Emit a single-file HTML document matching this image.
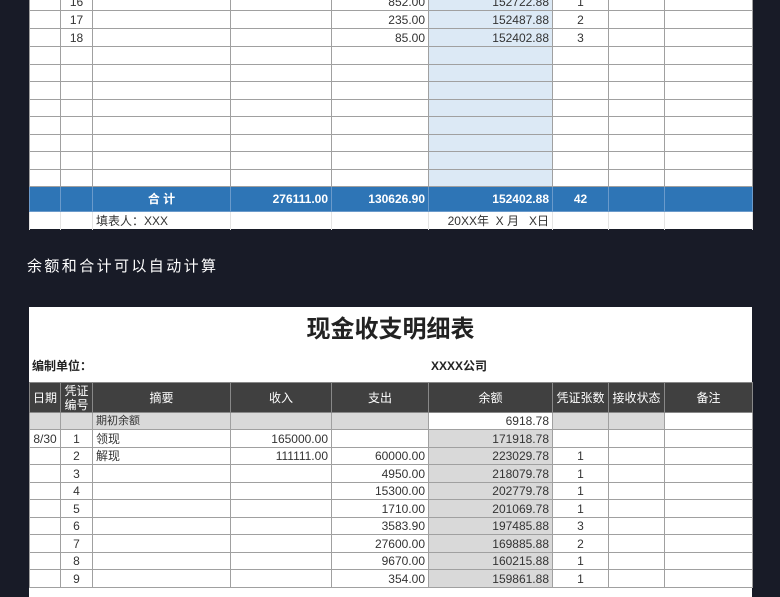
<!DOCTYPE html>
<html><head><meta charset="utf-8"><style>
body{margin:0;width:780px;height:585px;background:#181b27;position:relative;overflow:hidden;font-family:"Liberation Sans","Noto Sans CJK SC",sans-serif;}
table{position:absolute;left:29px;border-collapse:collapse;table-layout:fixed;width:723px;font-size:12px;color:#333;}
td{border:1px solid #a0a0a0;padding:0 3px;white-space:nowrap;overflow:hidden;line-height:14px;}
.r{text-align:right;}.c{text-align:center;}
.bl{background:#dce9f5;}
.tot td{background:#2e75b6;color:#fff;font-weight:bold;font-size:12px;border-color:#6a9acb;}
.ft td{border-color:#e4e4e4;border-bottom:none;}
.g{background:#d9d9d9;}
.hd td{background:#404040;color:#fff;text-align:center;font-size:12px;border-color:#888;line-height:14px;}
</style></head><body>
<div style="position:absolute;left:29px;top:0;width:723px;height:229px;background:#fff"></div>
<table style="top:-8px">
<colgroup><col style="width:31px"><col style="width:32px"><col style="width:138px"><col style="width:101px"><col style="width:97px"><col style="width:124px"><col style="width:56px"><col style="width:56px"><col style="width:88px"></colgroup>
<tr style="height:18px"><td></td><td class="c">16</td><td></td><td></td><td class="r">852.00</td><td class="r bl">152722.88</td><td class="c">1</td><td></td><td></td></tr>
<tr style="height:18px"><td></td><td class="c">17</td><td></td><td></td><td class="r">235.00</td><td class="r bl">152487.88</td><td class="c">2</td><td></td><td></td></tr>
<tr style="height:18px"><td></td><td class="c">18</td><td></td><td></td><td class="r">85.00</td><td class="r bl">152402.88</td><td class="c">3</td><td></td><td></td></tr>
<tr style="height:18px"><td></td><td></td><td></td><td></td><td></td><td class="bl"></td><td></td><td></td><td></td></tr>
<tr style="height:17px"><td></td><td></td><td></td><td></td><td></td><td class="bl"></td><td></td><td></td><td></td></tr>
<tr style="height:18px"><td></td><td></td><td></td><td></td><td></td><td class="bl"></td><td></td><td></td><td></td></tr>
<tr style="height:17px"><td></td><td></td><td></td><td></td><td></td><td class="bl"></td><td></td><td></td><td></td></tr>
<tr style="height:18px"><td></td><td></td><td></td><td></td><td></td><td class="bl"></td><td></td><td></td><td></td></tr>
<tr style="height:17px"><td></td><td></td><td></td><td></td><td></td><td class="bl"></td><td></td><td></td><td></td></tr>
<tr style="height:18px"><td></td><td></td><td></td><td></td><td></td><td class="bl"></td><td></td><td></td><td></td></tr>
<tr style="height:17px"><td></td><td></td><td></td><td></td><td></td><td class="bl"></td><td></td><td></td><td></td></tr>
<tr class="tot" style="height:25px"><td></td><td></td><td class="c">合 计</td><td class="r">276111.00</td><td class="r">130626.90</td><td class="r">152402.88</td><td class="c">42</td><td></td><td></td></tr>
<tr class="ft" style="height:18px"><td></td><td></td><td>填表人：XXX</td><td></td><td></td><td class="r" style="font-size:12px">20XX年&nbsp; X 月&nbsp;&nbsp; X日</td><td></td><td></td><td></td></tr>
</table>
<div style="position:absolute;left:27px;top:257px;color:#fff;font-size:15px;letter-spacing:2.4px;line-height:20px">余额和合计可以自动计算</div>
<div style="position:absolute;left:29px;top:307px;width:723px;height:290px;background:#fff"></div>
<div style="position:absolute;left:29px;top:313px;width:723px;text-align:center;font-size:24px;font-weight:bold;color:#222;line-height:34px">现金收支明细表</div>
<div style="position:absolute;left:32px;top:357px;font-size:12px;font-weight:bold;color:#222">编制单位：</div>
<div style="position:absolute;left:431px;top:357px;font-size:12px;font-weight:bold;color:#222">XXXX公司</div>
<table style="top:382px">
<colgroup><col style="width:31px"><col style="width:32px"><col style="width:138px"><col style="width:101px"><col style="width:97px"><col style="width:124px"><col style="width:56px"><col style="width:56px"><col style="width:88px"></colgroup>
<tr class="hd" style="height:30px"><td>日期</td><td style="padding:0">凭证<br>编号</td><td>摘要</td><td>收入</td><td>支出</td><td>余额</td><td style="padding:0">凭证张数</td><td style="padding:0">接收状态</td><td>备注</td></tr>
<tr style="height:17px"><td class="g"></td><td class="g"></td><td class="g" style="font-size:11px">期初余额</td><td class="g"></td><td class="g"></td><td class="r">6918.78</td><td class="g"></td><td class="g"></td><td></td></tr>
<tr style="height:18px"><td class="c">8/30</td><td class="c">1</td><td>领现</td><td class="r">165000.00</td><td></td><td class="r g">171918.78</td><td></td><td></td><td></td></tr>
<tr style="height:17px"><td></td><td class="c">2</td><td>解现</td><td class="r">111111.00</td><td class="r">60000.00</td><td class="r g">223029.78</td><td class="c">1</td><td></td><td></td></tr>
<tr style="height:18px"><td></td><td class="c">3</td><td></td><td></td><td class="r">4950.00</td><td class="r g">218079.78</td><td class="c">1</td><td></td><td></td></tr>
<tr style="height:17px"><td></td><td class="c">4</td><td></td><td></td><td class="r">15300.00</td><td class="r g">202779.78</td><td class="c">1</td><td></td><td></td></tr>
<tr style="height:18px"><td></td><td class="c">5</td><td></td><td></td><td class="r">1710.00</td><td class="r g">201069.78</td><td class="c">1</td><td></td><td></td></tr>
<tr style="height:17px"><td></td><td class="c">6</td><td></td><td></td><td class="r">3583.90</td><td class="r g">197485.88</td><td class="c">3</td><td></td><td></td></tr>
<tr style="height:18px"><td></td><td class="c">7</td><td></td><td></td><td class="r">27600.00</td><td class="r g">169885.88</td><td class="c">2</td><td></td><td></td></tr>
<tr style="height:17px"><td></td><td class="c">8</td><td></td><td></td><td class="r">9670.00</td><td class="r g">160215.88</td><td class="c">1</td><td></td><td></td></tr>
<tr style="height:18px"><td></td><td class="c">9</td><td></td><td></td><td class="r">354.00</td><td class="r g">159861.88</td><td class="c">1</td><td></td><td></td></tr>
</table>
</body></html>
